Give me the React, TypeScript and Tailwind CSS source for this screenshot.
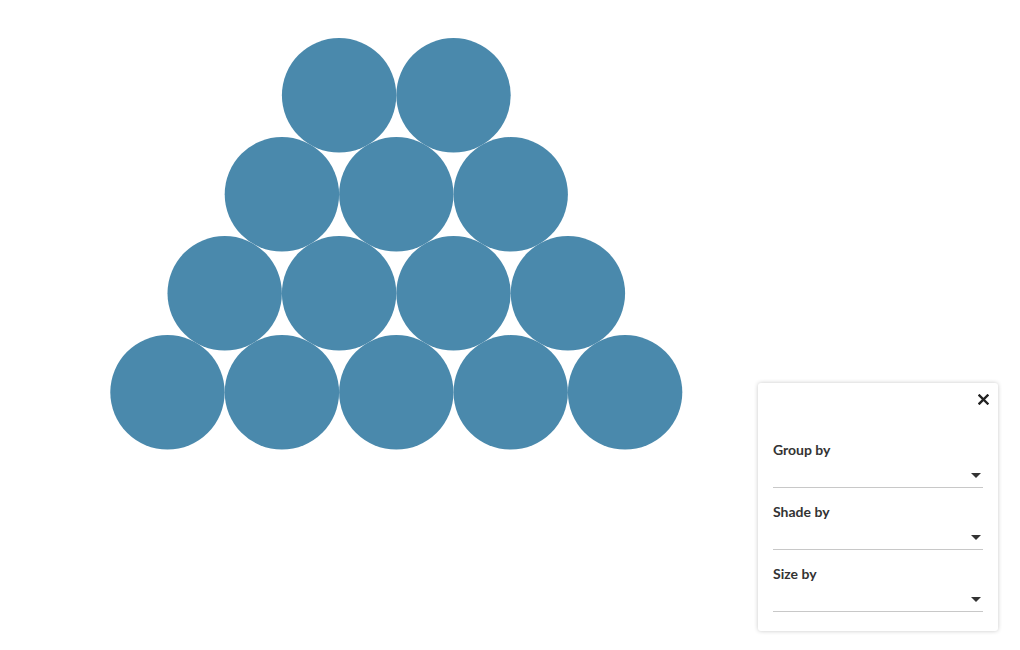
const R = 57.2
const DX = 114.4
const DY = 99
// rows from top: count, first center x, center y
const rows = [
  { n: 2, x: 339.1, y: 392.3 - 3 * DY },
  { n: 3, x: 281.9, y: 392.3 - 2 * DY },
  { n: 4, x: 224.7, y: 392.3 - DY },
  { n: 5, x: 167.5, y: 392.3 },
]

function Caret() {
  return (
    <svg width="10" height="5" viewBox="0 0 10 5" className="text-[#333]">
      <path d="M0 0 L10 0 L5 5 Z" fill="currentColor" />
    </svg>
  )
}

function Field({ label }: { label: string }) {
  return (
    <div className="mb-[16px]">
      <div className="text-[14px] leading-[16px] font-bold text-[#333]">{label}</div>
      <div className="h-[30px] border-b border-[#c8c8c8] flex items-center justify-end pr-[2px] pt-[6px]">
        <Caret />
      </div>
    </div>
  )
}

export default function App() {
  return (
    <div
      className="w-[1020px] h-[650px] bg-white flex"
      style={{ fontFamily: "Lato, 'Open Sans', sans-serif" }}
    >
      <svg width="758" height="650" viewBox="0 0 758 650" className="shrink-0">
        {rows.map((row, ri) =>
          Array.from({ length: row.n }).map((_, i) => (
            <circle key={`${ri}-${i}`} cx={row.x + i * DX} cy={row.y} r={R} fill="#4a89ac" />
          ))
        )}
      </svg>
      <div className="self-end mb-[19px] w-[240px] bg-white rounded-[3px] shadow-[0_0_4px_rgba(0,0,0,0.22)] px-[15px] pb-[3px]">
        <div className="h-[31px] pt-[1px] flex items-center justify-end -mr-[6px]">
          <svg width="11" height="11" viewBox="0 0 11 11">
            <path d="M1.5 1.5 L9.5 9.5 M9.5 1.5 L1.5 9.5" stroke="#222" strokeWidth="2.4" strokeLinecap="square" />
          </svg>
        </div>
        <div className="mt-[28px]">
          <Field label="Group by" />
          <Field label="Shade by" />
          <Field label="Size by" />
        </div>
      </div>
    </div>
  )
}
